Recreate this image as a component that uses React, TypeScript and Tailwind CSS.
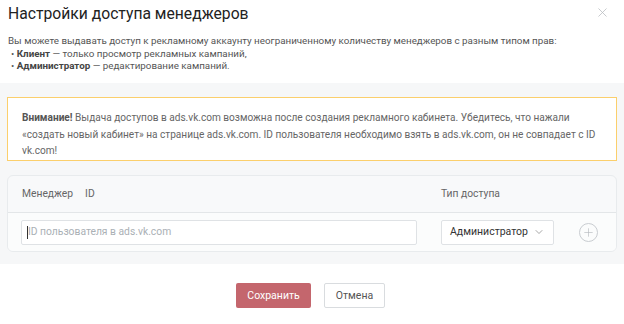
import { ChevronDown, Plus, X } from "lucide-react";

export default function App() {
  return (
    <div className="w-[624px] h-[324px] bg-white text-[#333] font-['Roboto',sans-serif] flex flex-col overflow-hidden">
      <div className="relative h-[83px] shrink-0 px-[8px] pt-[2px]">
        <h1 className="text-[15.7px] leading-[24px] text-[#222]">
          Настройки доступа менеджеров
        </h1>
        <button
          type="button"
          className="absolute right-[14px] top-[5px] text-[#b5b9bd]"
        >
          <X size={15} strokeWidth={1.2} />
        </button>
        <div className="mt-[9px] text-[9.8px] leading-[12.5px] text-[#555]">
          <p>
            Вы можете выдавать доступ к рекламному аккаунту неограниченному
            количеству менеджеров с разным типом прав:
          </p>
          <p className="pl-[3px]">
            • <b className="font-bold text-[#444]">Клиент</b> — только просмотр
            рекламных кампаний,
          </p>
          <p className="pl-[3px]">
            • <b className="font-bold text-[#444]">Администратор</b> —
            редактирование кампаний.
          </p>
        </div>
      </div>

      <div className="h-[181px] shrink-0 bg-[#f6f7f8] px-[7px] pt-[14px] flex flex-col gap-[14px]">
        <div className="h-[64px] bg-white border border-[#fbcf6c] px-[14px] pt-[12px] text-[10.1px] leading-[16.5px] text-[#666]">
          <b className="text-[#555]">Внимание!</b> Выдача доступов в ads.vk.com
          возможна после создания рекламного кабинета. Убедитесь, что нажали
          «создать новый кабинет» на странице ads.vk.com. ID пользователя
          необходимо взять в ads.vk.com, он не совпадает с ID vk.com!
        </div>

        <div className="border border-[#e8ebed] rounded-[6px] bg-[#f8f9fa] overflow-hidden">
          <div className="flex items-center h-[37px] border-b border-[#e3e6e8] text-[10.3px] text-[#666]">
            <div className="w-[433px] pl-[14px] flex gap-[12px]">
              <span>Менеджер</span>
              <span>ID</span>
            </div>
            <span>Тип доступа</span>
          </div>
          <div className="flex items-center h-[38px] bg-[#fbfcfc]">
            <div className="ml-[13px] w-[396px] h-[25px] bg-white border border-[#dfe2e5] rounded-[2px] flex items-center pl-[5px] text-[10.3px] text-[#aab0b5]">
              <span className="w-[1px] h-[13px] bg-[#333]"></span>
              ID пользователя в ads.vk.com
            </div>
            <div className="ml-[24px] w-[113px] h-[25px] bg-white border border-[#dfe2e5] rounded-[2px] flex items-center justify-between pl-[8px] pr-[8px] text-[10.5px] text-[#333]">
              <span>Администратор</span>
              <ChevronDown size={12} strokeWidth={1.3} className="text-[#777]" />
            </div>
            <div className="ml-[25px] w-[19px] h-[19px] rounded-full border border-[#c9cdd1] flex items-center justify-center text-[#b5babe]">
              <Plus size={13} strokeWidth={1.2} />
            </div>
          </div>
        </div>
      </div>

      <div className="flex justify-center gap-[13px] pt-[19px] pr-[3px]">
        <button
          type="button"
          className="w-[75px] h-[25px] bg-[#c4666d] rounded-[2px] text-white text-[10.5px]"
        >
          Сохранить
        </button>
        <button
          type="button"
          className="w-[61px] h-[25px] bg-white border border-[#d9dcdf] rounded-[2px] text-[#555] text-[10.5px]"
        >
          Отмена
        </button>
      </div>
    </div>
  );
}
